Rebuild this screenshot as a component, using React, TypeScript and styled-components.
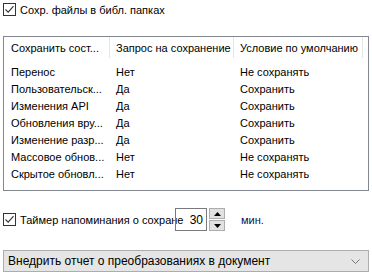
import styled, { createGlobalStyle } from 'styled-components';

const GlobalStyle = createGlobalStyle`
  html, body {
    margin: 0;
    padding: 0;
    background: #ffffff;
  }
  body {
    font-family: 'Liberation Sans', Arial, sans-serif;
    font-size: 11px;
    color: #000000;
  }
`;

const Page = styled.div`
  width: 372px;
  height: 272px;
  box-sizing: border-box;
  padding: 3px 3px 0 3px;
  display: flex;
  flex-direction: column;
`;

const CheckRow = styled.label`
  display: flex;
  align-items: center;
  gap: 4px;
  height: 13px;
  white-space: nowrap;
`;

const Box = styled.span`
  width: 13px;
  height: 13px;
  box-sizing: border-box;
  border: 1px solid #333333;
  background: #ffffff;
  display: flex;
  align-items: center;
  justify-content: center;
  flex: none;
`;

const ListBox = styled.div`
  margin-top: 20px;
  height: 155px;
  box-sizing: border-box;
  border: 1px solid #828790;
  background: #ffffff;
`;

const cols = '106px 124px 129px 1fr';

const HeaderRow = styled.div`
  display: grid;
  grid-template-columns: ${cols};
  height: 21px;
  margin-bottom: 5px;
`;

const HeadCell = styled.div<{ $pad: number }>`
  display: flex;
  align-items: center;
  padding-left: ${(p) => p.$pad}px;
  border-right: 1px solid #e5e5e5;
  white-space: nowrap;
  overflow: hidden;
  &:last-child {
    border-right: none;
  }
`;

const Row = styled.div`
  display: grid;
  grid-template-columns: ${cols};
  height: 17px;
  align-items: center;
`;

const Cell = styled.div<{ $pad: number }>`
  padding-left: ${(p) => p.$pad}px;
  white-space: nowrap;
  overflow: hidden;
`;

const TimerRow = styled.div`
  display: flex;
  align-items: center;
  height: 23px;
  margin-top: 17px;
  white-space: nowrap;
`;

const TimerLabel = styled.span`
  width: 172px;
  flex: none;
  display: flex;
  align-items: center;
  gap: 4px;
`;

const SpinInput = styled.div`
  width: 32px;
  height: 23px;
  box-sizing: border-box;
  border: 1px solid #7a7a7a;
  display: flex;
  align-items: center;
  justify-content: flex-end;
  padding-right: 3px;
  font-size: 12px;
`;

const SpinButtons = styled.div`
  display: flex;
  flex-direction: column;
  gap: 1px;
  margin-left: 2px;
`;

const SpinBtn = styled.div`
  width: 16px;
  height: 11px;
  box-sizing: border-box;
  border: 1px solid #adadad;
  background: #e1e1e1;
  display: flex;
  align-items: center;
  justify-content: center;
`;

const Units = styled.span`
  margin-left: 16px;
  color: #10104a;
`;

const Dropdown = styled.div`
  margin-top: 19px;
  height: 22px;
  box-sizing: border-box;
  border: 1px solid #adadad;
  background: #e5e5e5;
  display: flex;
  align-items: center;
  justify-content: space-between;
  padding: 0 8px 0 4px;
  font-size: 12px;
`;

function Check() {
  return (
    <Box>
      <svg width="11" height="11" viewBox="0 0 11 11">
        <path d="M1.5 5.5 L4.2 8.2 L9.5 2.2" fill="none" stroke="#333" strokeWidth="1.1" />
      </svg>
    </Box>
  );
}

const rows = [
  ['Перенос', 'Нет', 'Не сохранять'],
  ['Пользовательск...', 'Да', 'Сохранить'],
  ['Изменения API', 'Да', 'Сохранить'],
  ['Обновления вру...', 'Да', 'Сохранить'],
  ['Изменение разр...', 'Да', 'Сохранить'],
  ['Массовое обнов...', 'Нет', 'Не сохранять'],
  ['Скрытое обновл...', 'Нет', 'Не сохранять'],
];

export default function App() {
  return (
    <>
      <GlobalStyle />
      <Page>
        <CheckRow>
          <Check />
          Сохр. файлы в библ. папках
        </CheckRow>
        <ListBox>
          <HeaderRow>
            <HeadCell $pad={7}>Сохранить сост...</HeadCell>
            <HeadCell $pad={6}>Запрос на сохранение</HeadCell>
            <HeadCell $pad={6}>Условие по умолчанию</HeadCell>
            <HeadCell $pad={0} />
          </HeaderRow>
          {rows.map((r) => (
            <Row key={r[0]}>
              <Cell $pad={7}>{r[0]}</Cell>
              <Cell $pad={6}>{r[1]}</Cell>
              <Cell $pad={6}>{r[2]}</Cell>
            </Row>
          ))}
        </ListBox>
        <TimerRow>
          <TimerLabel>
            <Check />
            Таймер напоминания о сохране
          </TimerLabel>
          <SpinInput>30</SpinInput>
          <SpinButtons>
            <SpinBtn>
              <svg width="7" height="4" viewBox="0 0 7 4">
                <path d="M0 4 L3.5 0 L7 4 Z" fill="#000" />
              </svg>
            </SpinBtn>
            <SpinBtn>
              <svg width="7" height="4" viewBox="0 0 7 4">
                <path d="M0 0 L7 0 L3.5 4 Z" fill="#000" />
              </svg>
            </SpinBtn>
          </SpinButtons>
          <Units>мин.</Units>
        </TimerRow>
        <Dropdown>
          <span>Внедрить отчет о преобразованиях в документ</span>
          <svg width="9" height="5" viewBox="0 0 9 5">
            <path d="M0.5 0.5 L4.5 4.5 L8.5 0.5" fill="none" stroke="#777" strokeWidth="1" />
          </svg>
        </Dropdown>
      </Page>
    </>
  );
}
